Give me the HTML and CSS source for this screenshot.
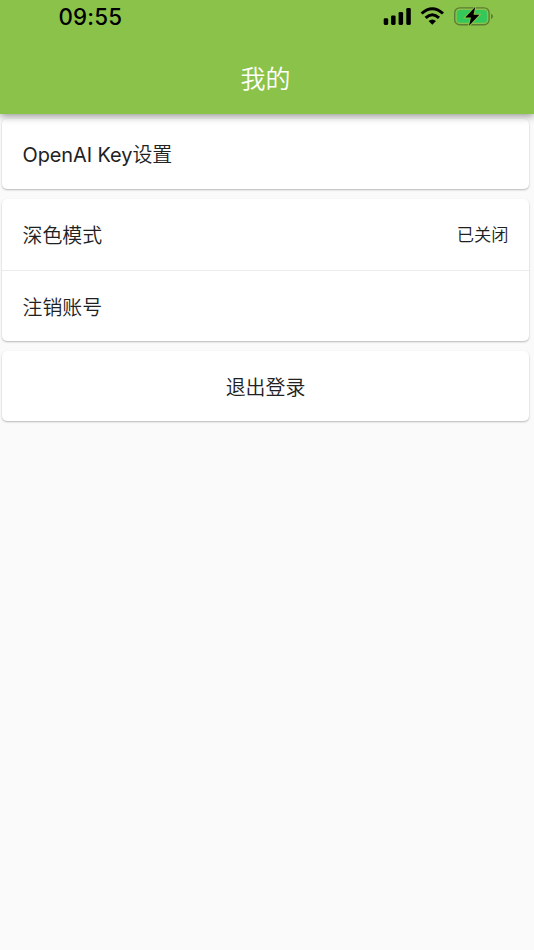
FILE: index.html
```html
<!DOCTYPE html>
<html lang="zh-CN">
<head>
<meta charset="utf-8">
<title>我的</title>
<link rel="stylesheet" href="styles.css">
</head>
<body>
<header class="header">
  <div class="status">
    <span class="time">09:55</span>
    <svg class="status-icons" width="112" height="22" viewBox="0 0 112 22">
      <rect x="0.7" y="13.2" width="4.5" height="6.7" rx="1.3"/>
      <rect x="8.1" y="10.5" width="4.5" height="9.4" rx="1.3"/>
      <rect x="15.6" y="7" width="4.5" height="12.9" rx="1.3"/>
      <rect x="23.3" y="3" width="4.5" height="16.9" rx="1.3"/>
      <g fill="none" stroke="#000" stroke-width="3">
        <path d="M38.6 8.5Q49.3-1.1 60 8.5"/>
        <path d="M42.6 12.8Q49.3 6.6 56 12.8"/>
      </g>
      <path d="M45.6 16Q49.3 13 53 16L49.3 19.8Z"/>
      <rect x="71.7" y="2.9" width="34.4" height="16.9" rx="5" fill="none" stroke="#5d7d35" stroke-width="1.4"/>
      <rect x="73.8" y="5" width="30.2" height="12.7" rx="3.2" fill="#34c759"/>
      <path d="M108 8.7Q110 9.5 110 11.4T108 14.1Z" fill="#5d7d35"/>
      <path d="M92.2 2.1 82.2 12.6H88L86 20.7 96.4 9.8H90.5Z" stroke="#8bc34a" stroke-width="2" paint-order="stroke"/>
    </svg>
  </div>
  <h1 class="title">我的</h1>
</header>
<main class="content">
  <section class="card"><div class="row"><span class="key"><span class="latin">OpenAI Key</span>设置</span></div></section>
  <section class="card">
    <div class="row first"><span>深色模式</span><span class="value">已关闭</span></div>
    <div class="row divided">注销账号</div>
  </section>
  <section class="card"><div class="row centered">退出登录</div></section>
</main>
</body>
</html>
```
FILE: styles.css
```css
* { box-sizing: border-box; }
body {
  margin: 0;
  min-height: 950px;
  background: #fafafa;
  color: #212121;
  font-family: Inter, "Noto Sans CJK SC", sans-serif;
  font-weight: 350;
}
.header {
  position: relative;
  height: 114px;
  background: #8bc34a;
  box-shadow: 0 2px 8px rgba(0, 0, 0, .42);
}
.status {
  display: flex;
  justify-content: space-between;
  height: 44px;
  padding: 5px 39px 0 58.5px;
}
.time {
  color: #000;
  font-size: 22.3px;
  font-weight: 500;
  line-height: 24px;
  letter-spacing: .2px;
}
.title {
  margin: 0;
  color: #fff;
  font-size: 25px;
  font-weight: 350;
  line-height: 71px;
  text-align: center;
  padding-right: 3px;
}
.content {
  display: flex;
  flex-direction: column;
  gap: 10px;
  padding: 5px 5px 0 2px;
}
.card {
  background: #fff;
  border-radius: 5px;
  box-shadow: 0 1px 2px rgba(0, 0, 0, .27);
}
.row {
  display: flex;
  align-items: center;
  justify-content: space-between;
  height: 70px;
  padding: 0 20.5px;
  font-size: 19.9px;
}
.first { height: 71px; }
.divided {
  height: 71px;
  border-top: 1px solid #ececec;
}
.centered { justify-content: center; }
.key { padding-bottom: 1px; }
.latin {
  font-weight: 400;
  letter-spacing: -.05px;
}
.value {
  padding-bottom: 2px;
  font-size: 17.3px;
}
```
